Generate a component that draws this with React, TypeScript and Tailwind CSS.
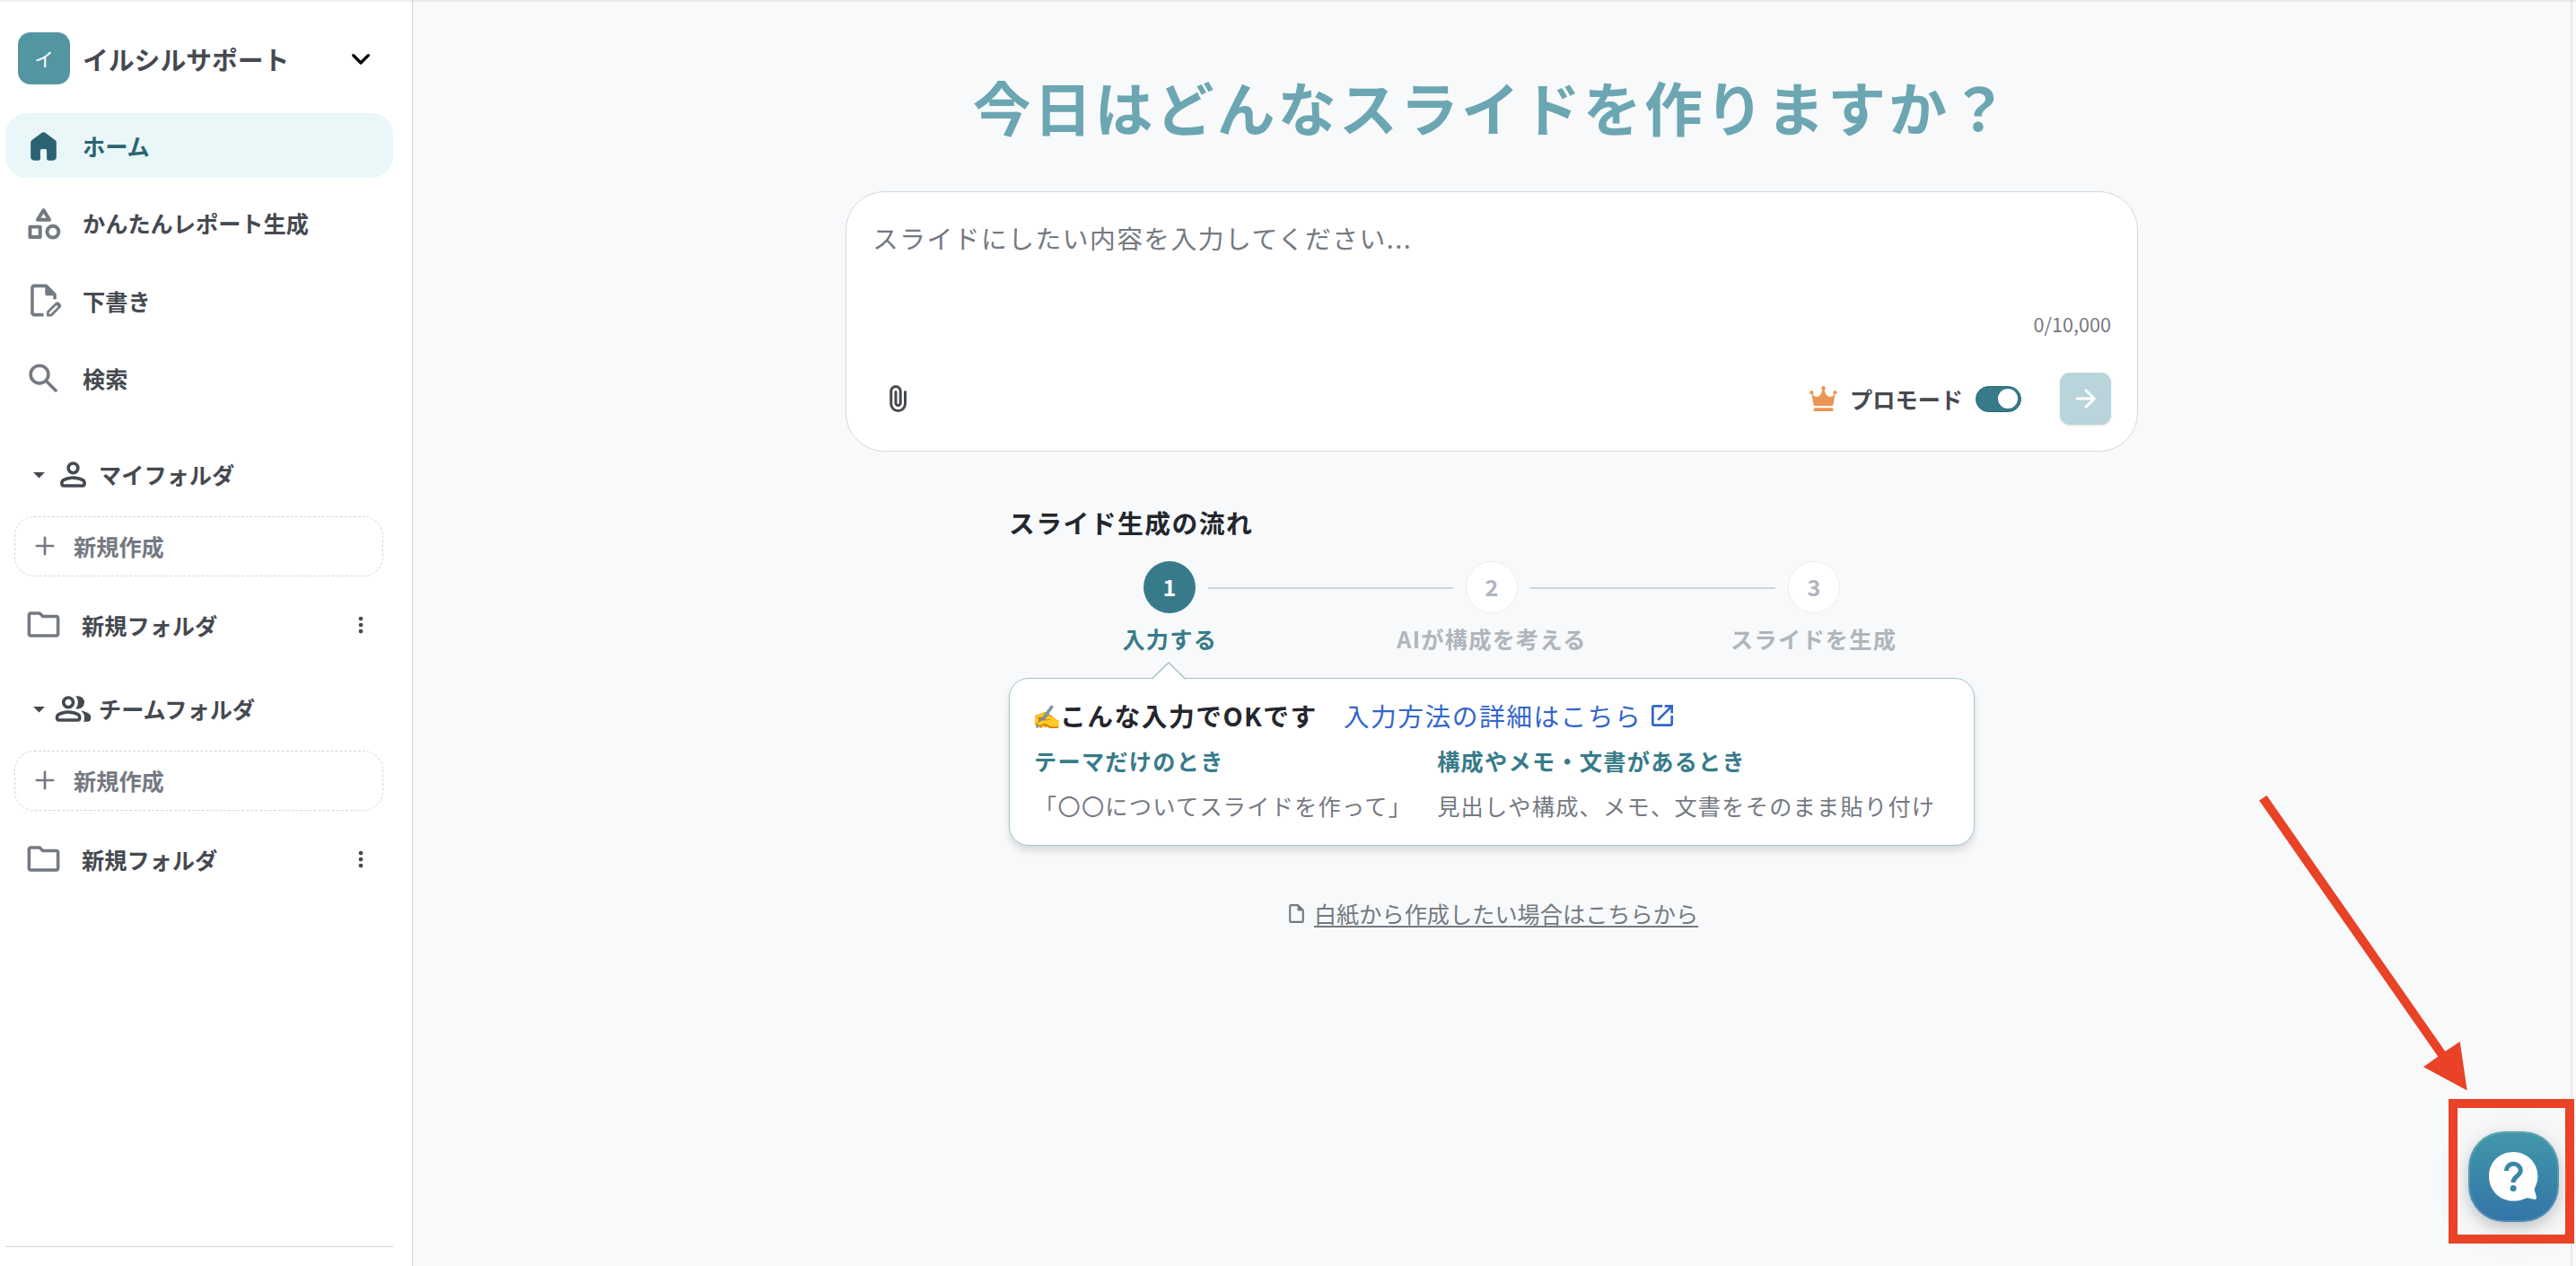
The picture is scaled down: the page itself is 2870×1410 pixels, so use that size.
import React from 'react';
import { MdOpenInNew } from 'react-icons/md';

type IconProps = { d: string; className?: string };

const Icon: React.FC<IconProps> = ({ d, className = '' }) => (
  <svg viewBox="0 0 24 24" fill="currentColor" className={`shrink-0 ${className}`}>
    <path d={d} />
  </svg>
);

const icons = {
  home: 'M4 19v-9q0-.475.213-.9t.587-.7l6-4.5q.525-.4 1.2-.4t1.2.4l6 4.5q.375.275.588.7T20 10v9q0 .825-.588 1.413T18 21h-3q-.425 0-.712-.288T14 20v-5q0-.425-.288-.712T13 14h-2q-.425 0-.712.288T10 15v5q0 .425-.288.713T9 21H6q-.825 0-1.412-.587T4 19',
  draft: 'M14 22v-2.65q0-.2.075-.387t.225-.338l5.225-5.2q.225-.225.5-.325t.55-.1q.3 0 .575.113t.5.337l.925.925q.2.225.313.5t.112.55t-.1.563t-.325.512l-5.2 5.2q-.15.15-.337.225T16.65 22zm1.5-1.5h.95l4.5-4.6l-.9-.9l-4.55 4.55zM6 22q-.825 0-1.412-.587T4 20V4q0-.825.588-1.412T6 2h7.175q.4 0 .763.15t.637.425l4.85 4.85q.275.275.425.638t.15.762V11.3h-2V9h-4q-.425 0-.712-.288T13 8V4H6v16h6v2z',
  search: 'M9.5 16q-2.725 0-4.612-1.888T3 9.5t1.888-4.612T9.5 3t4.613 1.888T16 9.5q0 1.1-.35 2.075T14.7 13.3l5.6 5.6q.275.275.275.7t-.275.7t-.7.275t-.7-.275l-5.6-5.6q-.75.6-1.725.95T9.5 16m0-2q1.875 0 3.188-1.312T14 9.5t-1.312-3.187T9.5 5T6.313 6.313T5 9.5t1.313 3.188T9.5 14',
  person: 'M12 12q-1.65 0-2.825-1.175T8 8t1.175-2.825T12 4t2.825 1.175T16 8t-1.175 2.825T12 12m-8 6v-.8q0-.85.438-1.562T5.6 14.55q1.55-.775 3.15-1.162T12 13t3.25.388t3.15 1.162q.725.375 1.163 1.088T20 17.2v.8q0 .825-.587 1.413T18 20H6q-.825 0-1.412-.587T4 18m2 0h12v-.8q0-.275-.137-.5t-.363-.35q-1.35-.675-2.725-1.012T12 15t-2.775.338T6.5 16.35q-.225.125-.363.35T6 17.2zm6-8q.825 0 1.413-.587T14 8t-.587-1.412T12 6t-1.412.588T10 8t.588 1.413T12 10',
  group: 'M1 17.2q0-.85.438-1.562T2.6 14.55q1.55-.775 3.15-1.162T9 13t3.25.388t3.15 1.162q.725.375 1.163 1.088T17 17.2v.8q0 .825-.587 1.413T15 20H3q-.825 0-1.412-.587T1 18zM18.45 20q.275-.45.413-.962T19 18v-1q0-1.1-.612-2.113T16.65 13.15q1.275.15 2.4.513t2.1.887q.9.5 1.375 1.112T23 17v1q0 .825-.587 1.413T21 20zM9 12q-1.65 0-2.825-1.175T5 8t1.175-2.825T9 4t2.825 1.175T13 8t-1.175 2.825T9 12m10-4q0 1.65-1.175 2.825T15 12q-.275 0-.7-.062t-.7-.138q.675-.8 1.038-1.775T15 8t-.362-2.025T13.6 4.2q.35-.125.7-.163T15 4q1.65 0 2.825 1.175T19 8M3 18h12v-.8q0-.275-.137-.5t-.363-.35q-1.35-.675-2.725-1.012T9 15t-2.775.338T3.5 16.35q-.225.125-.363.35T3 17.2zm6-8q.825 0 1.413-.587T11 8t-.587-1.412T9 6t-1.412.588T7 8t.588 1.413T9 10',
  folder: 'M4 20q-.825 0-1.412-.587T2 18V6q0-.825.588-1.412T4 4h5.175q.4 0 .763.15t.637.425L12 6h8q.825 0 1.413.588T22 8v10q0 .825-.587 1.413T20 20zm0-2h16V8h-8.825l-2-2H4z',
  caret: 'M7 10l5 5 5-5z',
  more: 'M12 20q-.825 0-1.412-.587T10 18t.588-1.412T12 16t1.413.588T14 18t-.587 1.413T12 20m0-6q-.825 0-1.412-.587T10 12t.588-1.412T12 10t1.413.588T14 12t-.587 1.413T12 14m0-6q-.825 0-1.412-.587T10 6t.588-1.412T12 4t1.413.588T14 6t-.587 1.413T12 8',
  attach: 'M18 15.75q0 2.6-1.825 4.425T11.75 22t-4.425-1.825T5.5 15.75V6.5q0-1.875 1.313-3.187T10 2t3.188 1.313T14.5 6.5v8.75q0 1.15-.8 1.95t-1.95.8t-1.95-.8t-.8-1.95V7q0-.425.288-.712T10 6t.713.288T11 7v8.25q0 .325.213.538t.537.212t.538-.213t.212-.537V6.5q-.025-1.05-.737-1.775T10 4t-1.775.725T7.5 6.5v9.25q-.025 1.775 1.225 3.013T11.75 20q1.75 0 2.975-1.237T16 15.75V7q0-.425.288-.712T17 6t.713.288T18 7z',
  arrow: 'M16.175 13H5q-.425 0-.712-.288T4 12t.288-.712T5 11h11.175l-4.9-4.9q-.3-.3-.288-.7t.313-.7q.3-.275.7-.288t.7.288l6.6 6.6q.15.15.213.325t.062.375t-.062.375t-.213.325l-6.6 6.6q-.275.275-.687.275T11.3 19.3q-.3-.3-.3-.712t.3-.713z',
  file: 'M6 22q-.825 0-1.412-.587T4 20V4q0-.825.588-1.412T6 2h7.175q.4 0 .763.15t.637.425l4.85 4.85q.275.275.425.638t.15.762V20q0 .825-.587 1.413T18 22zm7-14V4H6v16h12V9h-4q-.425 0-.712-.288T13 8',
};

const CategoryIcon: React.FC = () => (
  <svg
    viewBox="0 0 24 24"
    fill="none"
    stroke="currentColor"
    strokeWidth="2.2"
    strokeLinejoin="round"
    className="size-[43px] shrink-0"
  >
    <path d="M12 4 8.3 9.9h7.4z" />
    <rect x="3.6" y="14.3" width="6.3" height="6.3" />
    <circle cx="17.8" cy="17.4" r="3.6" />
  </svg>
);

const CrownIcon: React.FC = () => (
  <svg viewBox="0 0 30.5 28" fill="#ec9655" className="h-7 w-[31px]">
    <circle cx="2.2" cy="7.2" r="2.1" />
    <circle cx="15.25" cy="2.2" r="2.2" />
    <circle cx="28.3" cy="7.2" r="2.1" />
    <path d="M2 8.2c2.6 3.4 6 5 8.6 2.8 2-1.7 3.3-4 3.5-8h2.3c.2 4 1.5 6.3 3.500 8 2.600 2.200 6 .6 8.600-2.800l-2.200 12.200q-.3 1.600-1.800 1.600H6q-1.500 0-1.800-1.600z" />
    <rect x="4.3" y="24.3" width="22" height="3.7" rx="1.6" />
  </svg>
);

const navItems = [
  { label: 'かんたんレポート生成', icon: <CategoryIcon /> },
  { label: '下書き', icon: <Icon d={icons.draft} className="size-[43px]" /> },
  { label: '検索', icon: <Icon d={icons.search} className="size-[43px]" /> },
];

const FolderSection: React.FC<{ title: string; icon: string }> = ({ title, icon }) => (
  <section>
    <div className="flex h-[43px] items-center pl-[22px] text-[#454950]">
      <Icon d={icons.caret} className="size-[31px]" />
      <Icon d={icon} className="ml-px size-[43px]" />
      <span className="ml-[7px]">{title}</span>
    </div>
    <button className="mt-[25px] ml-[10px] flex h-[67px] w-[411px] items-center rounded-[22px] border border-dashed border-[#d3d5d9] pl-[15px] text-[#747982]">
      <svg viewBox="0 0 24 24" fill="none" stroke="currentColor" strokeWidth="1.8" strokeLinecap="round" className="size-9">
        <path d="M12 5.9v12.2M5.9 12h12.2" />
      </svg>
      <span className="ml-[14px]">新規作成</span>
    </button>
    <div className="mt-[18px] flex h-[72px] items-center pl-[21px] text-[#454950]">
      <Icon d={icons.folder} className="size-[43px] text-[#747982]" />
      <span className="ml-[21px] flex-1">新規フォルダ</span>
      <Icon d={icons.more} className="mr-[22px] size-[28px]" />
    </div>
  </section>
);

const Sidebar: React.FC = () => (
  <aside className="flex w-[460px] shrink-0 flex-col border-r border-[#d3d5da] bg-white pt-9 pr-[21px] pl-[6px] text-[25.2px] leading-[38px] font-bold text-[#454950]">
    <div className="flex h-[58px] items-center pl-[14px]">
      <div className="flex size-[58px] items-center justify-center rounded-[14px] bg-[#5396a2] text-[21.6px] font-normal text-white">
        イ
      </div>
      <span className="mt-px ml-[14px] flex-1 text-[28.8px]">イルシルサポート</span>
      <svg
        viewBox="0 0 24 24"
        fill="none"
        stroke="#000"
        strokeWidth="2"
        strokeLinecap="round"
        strokeLinejoin="round"
        className="mr-[16px] size-[40px]"
      >
        <path d="M7 10l5 5 5-5" />
      </svg>
    </div>

    <nav className="mt-8 flex flex-col gap-[14.4px]">
      <a className="flex h-[72px] items-center rounded-[24px] bg-[#e9f7f9] pl-[21px] text-[#2b6470]">
        <Icon d={icons.home} className="size-[43px]" />
        <span className="ml-[22px]">ホーム</span>
      </a>
      {navItems.map((item) => (
        <a key={item.label} className="flex h-[72px] items-center pl-[21px]">
          <span className="text-[#747982]">{item.icon}</span>
          <span className="ml-[22px]">{item.label}</span>
        </a>
      ))}
    </nav>

    <div className="mt-[49.8px] flex flex-col gap-[36px]">
      <FolderSection title="マイフォルダ" icon={icons.person} />
      <FolderSection title="チームフォルダ" icon={icons.group} />
    </div>

    <div className="mt-auto mb-[21px] h-px bg-[#d3d5d8]" />
  </aside>
);

const Composer: React.FC = () => (
  <div className="mt-[47px] flex h-[290px] w-[1440px] flex-col rounded-[43px] border border-[#d5d8dc] bg-white px-[29px] pt-[29px]">
    <p className="text-[28.8px] leading-[44px] tracking-[0.05em] text-[#747982]">
      スライドにしたい内容を入力してください...
    </p>
    <p className="mt-[58px] text-right text-[21.6px] leading-8 text-[#747982]">0/10,000</p>
    <div className="mt-[38px] flex h-[58px] items-center">
      <Icon d={icons.attach} className="ml-[11px] size-9 text-[#454950]" />
      <div className="ml-auto flex items-center">
        <CrownIcon />
        <span className="ml-[14px] text-[25.2px] leading-[38px] font-bold text-[#454950]">プロモード</span>
        <div className="ml-[14px] flex h-[29px] w-[51px] items-center justify-end rounded-full border border-[#2c6470] bg-[#377b8a] pr-[3px]">
          <div className="size-[22px] rounded-full bg-white" />
        </div>
        <button className="ml-[43px] flex h-[58px] w-[57px] items-center justify-center rounded-[11px] bg-[#b9d5db] text-white shadow-sm">
          <Icon d={icons.arrow} className="size-[34px]" />
        </button>
      </div>
    </div>
  </div>
);

const Flow: React.FC = () => (
  <div className="mt-[57px] w-[1076px]">
    <h2 className="text-[28.8px] leading-[43px] font-bold tracking-[0.05em] text-[#23262d]">スライド生成の流れ</h2>

    <div className="mt-[22px] flex items-center pl-[150px] text-[25.2px] font-bold">
      <span className="flex size-[58px] items-center justify-center rounded-full bg-[#377b8a] text-white">1</span>
      <span className="mx-[14px] mt-[2px] h-[2px] w-[273px] bg-[#ced5da]" />
      <span className="flex size-[58px] items-center justify-center rounded-full border border-[#eceef1] bg-white text-[#b0b5bd]">2</span>
      <span className="mx-[14px] mt-[2px] h-[2px] w-[273px] bg-[#ced5da]" />
      <span className="flex size-[58px] items-center justify-center rounded-full border border-[#eceef1] bg-white text-[#b0b5bd]">3</span>
    </div>
    <div className="mt-[9px] grid grid-cols-3 text-center text-[25.2px] leading-[38px] font-bold tracking-[0.05em] text-[#b0b5bd]">
      <span className="text-[#377b8a]">入力する</span>
      <span>AIが構成を考える</span>
      <span>スライドを生成</span>
    </div>

    <div className="relative mt-[25px] h-[187px] rounded-[22px] border border-[#a3c5cb] bg-white px-[26px] pt-[19px] shadow-[0_6px_10px_-1px_rgba(0,0,0,0.14)]">
      {/* callout pointer */}
      <svg viewBox="0 0 38 21" className="absolute -top-[19px] left-[158px] h-[21px] w-[38px]">
        <path d="M0 21v-1.5L19 1l19 18.5V21z" fill="#fff" />
        <path d="M0 19.5 19 1l19 18.5" fill="none" stroke="#a3c5cb" strokeWidth="1.6" />
      </svg>
      <div className="flex items-center text-[28.8px] leading-[43px] tracking-[0.05em]">
        <span className="-ml-px w-[31px] text-[26px] tracking-normal whitespace-nowrap">✍️</span>
        <span className="font-bold text-[#23262d]">こんな入力でOKです</span>
        <a className="ml-[29px] flex items-center gap-[7px] text-[#3366cc]">
          入力方法の詳細はこちら
          <MdOpenInNew className="size-[32px]" />
        </a>
      </div>
      <div className="mt-[10px] flex gap-[28px] pl-px text-[25.2px] leading-[38px] tracking-[0.05em] whitespace-nowrap text-[#747982]">
        <div>
          <p className="font-bold text-[#377b8a]">テーマだけのとき</p>
          <p className="mt-[12px]">「〇〇についてスライドを作って」</p>
        </div>
        <div>
          <p className="font-bold text-[#377b8a]">構成やメモ・文書があるとき</p>
          <p className="mt-[12px]">見出しや構成、メモ、文書をそのまま貼り付け</p>
        </div>
      </div>
    </div>
  </div>
);

const HelpButton: React.FC = () => (
  <button className="absolute top-[1260px] left-[2750px] flex size-[101px] items-center justify-center rounded-[40px] border-2 border-white/15 bg-linear-to-b from-[#4297a8] to-[#3375a8] bg-origin-border shadow-[0_6px_40px_rgba(0,0,0,0.1),0_6px_14px_rgba(0,0,0,0.15)]">
    <svg viewBox="0 0 55 55" className="size-[55px]">
      <path
        d="M27.2 0C42 0 54.4 11.5 54.4 27c0 4.6-1 8.3-2.8 11.8-.9 1.8-1 3.2-.5 5l1.800 6.200c.5 2-.8 3.200-2.700 2.800l-5.800-1.400c-1.600-.4-2.900-.3-4.600.5-3.700 1.800-7.800 2.700-12.600 2.700C12 54.600 0 42.500 0 27S12 0 27.200 0z"
        fill="#fff"
      />
      <path d="M19.5 21a7.9 7.6 0 0 1 15.8-.4c0 6.2-8.3 6.2-8.3 13.4" fill="none" stroke="#3c87a8" strokeWidth="5" />
      <circle cx="27.1" cy="40.5" r="3.5" fill="#3c87a8" />
    </svg>
  </button>
);

const Annotation: React.FC = () => (
  <>
    <svg viewBox="2500 870 270 360" className="absolute top-[870px] left-[2500px] h-[360px] w-[270px]" fill="#e94226">
      <path d="M2517 891.6 2525.5 886 2724.3 1171 2740.7 1160 2748.7 1214.6 2700 1188.3 2716.3 1176.7z" />
    </svg>
    <div className="absolute top-[1224px] left-[2728px] h-[161px] w-[140px] border-[10px] border-[#e94226]" />
  </>
);

const App: React.FC = () => (
  <div className="relative flex h-[1410px] w-[2870px] overflow-hidden bg-[#f7f9fa] font-['Noto_Sans_CJK_JP',sans-serif]">
    <Sidebar />
    <main className="flex flex-1 flex-col items-center pt-[70px]">
      <h1 className="text-[64.8px] leading-[96px] font-bold tracking-[0.05em] text-[#6ba6b2]">
        今日はどんなスライドを作りますか？
      </h1>
      <Composer />
      <Flow />
      <a className="mt-[57px] flex items-center gap-[7px] text-[25.2px] leading-9 text-[#747982]">
        <Icon d={icons.file} className="size-[25px]" />
        <span className="underline decoration-2 underline-offset-[3px]">白紙から作成したい場合はこちらから</span>
      </a>
    </main>
    <div className="w-[6px] shrink-0 border-l-2 border-[#e6e7e8] bg-[#fafafa]" />
    <div className="absolute inset-x-0 top-0 h-[3px] bg-linear-to-b from-black/8 to-transparent" />
    <HelpButton />
    <Annotation />
  </div>
);

export default App;
